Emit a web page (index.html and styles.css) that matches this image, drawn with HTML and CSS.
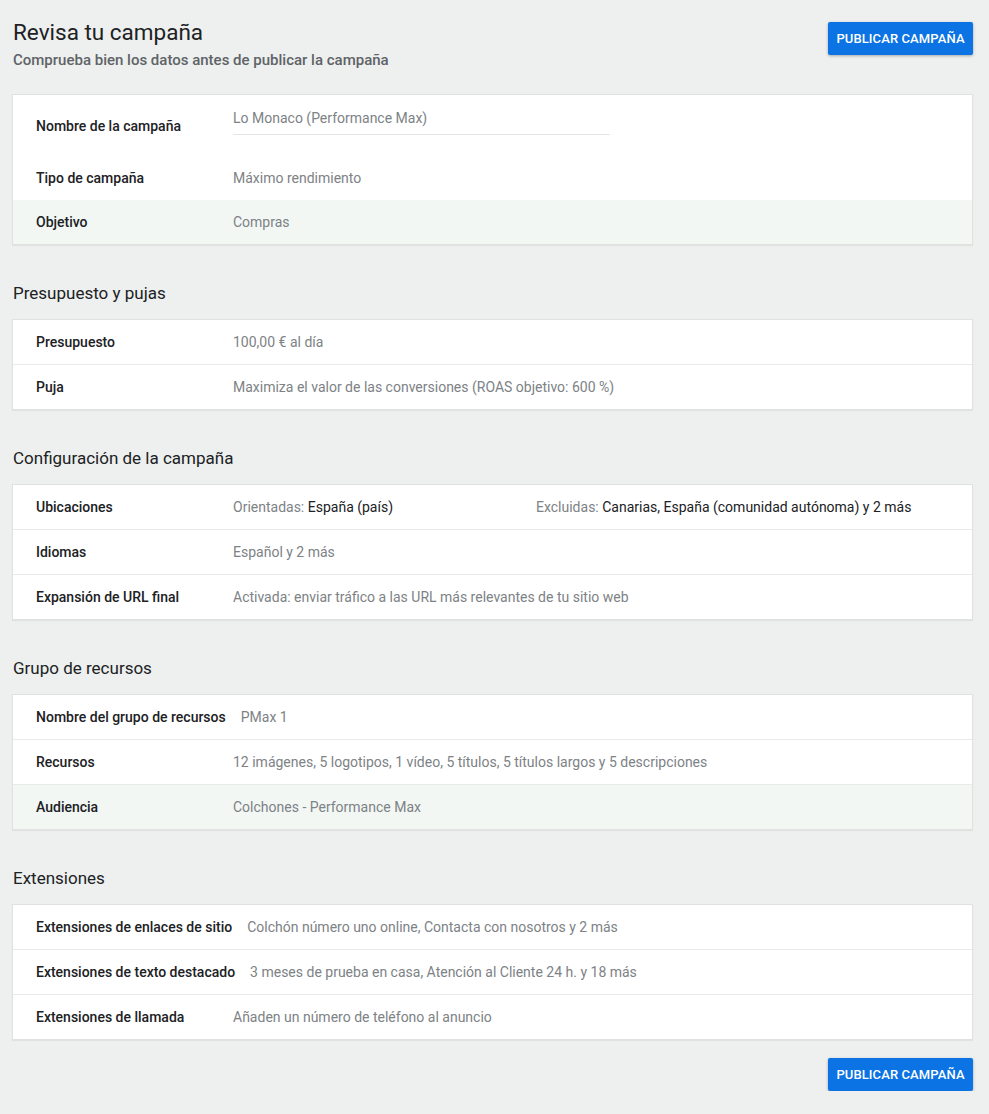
FILE: index.html
```html
<!DOCTYPE html>
<html lang="es">
<head>
    <meta charset="UTF-8">
    <meta name="viewport" content="width=device-width, initial-scale=1.0">
    <title>Revisa tu campaña</title>
    <link rel="stylesheet" href="styles.css">
</head>
<body>

<div class="page">
    <!-- CABECERA -->
    <div class="header">
        <div>
            <h1>Revisa tu campaña</h1>
            <div class="subtitle">Comprueba bien los datos antes de publicar la campaña</div>
        </div>
        <button class="publish">Publicar campaña</button>
    </div>

    <!-- DATOS GENERALES -->
    <div class="card first">
        <div class="row name-row">
            <div class="label">Nombre de la campaña</div>
            <div class="value input-like">Lo Monaco (Performance Max)</div>
        </div>
        <div class="row">
            <div class="label">Tipo de campaña</div>
            <div class="value">Máximo rendimiento</div>
        </div>
        <div class="row tinted">
            <div class="label">Objetivo</div>
            <div class="value">Compras</div>
        </div>
    </div>

    <!-- PRESUPUESTO -->
    <div class="section-title">Presupuesto y pujas</div>
    <div class="card">
        <div class="row">
            <div class="label">Presupuesto</div>
            <div class="value">100,00 € al día</div>
        </div>
        <div class="row">
            <div class="label">Puja</div>
            <div class="value">Maximiza el valor de las conversiones (ROAS objetivo: 600 %)</div>
        </div>
    </div>

    <!-- CONFIGURACIÓN -->
    <div class="section-title">Configuración de la campaña</div>
    <div class="card">
        <div class="row">
            <div class="label">Ubicaciones</div>
            <div class="value split">
                <span class="col">Orientadas: <b>España (país)</b></span>
                <span>Excluidas: <b>Canarias, España (comunidad autónoma) y 2 más</b></span>
            </div>
        </div>
        <div class="row">
            <div class="label">Idiomas</div>
            <div class="value">Español y 2 más</div>
        </div>
        <div class="row">
            <div class="label">Expansión de URL final</div>
            <div class="value">Activada: enviar tráfico a las URL más relevantes de tu sitio web</div>
        </div>
    </div>

    <!-- GRUPO DE RECURSOS -->
    <div class="section-title">Grupo de recursos</div>
    <div class="card">
        <div class="row">
            <div class="label">Nombre del grupo de recursos</div>
            <div class="value">PMax 1</div>
        </div>
        <div class="row">
            <div class="label">Recursos</div>
            <div class="value">12 imágenes, 5 logotipos, 1 vídeo, 5 títulos, 5 títulos largos y 5 descripciones</div>
        </div>
        <div class="row tinted">
            <div class="label">Audiencia</div>
            <div class="value">Colchones - Performance Max</div>
        </div>
    </div>

    <!-- EXTENSIONES -->
    <div class="section-title">Extensiones</div>
    <div class="card">
        <div class="row">
            <div class="label">Extensiones de enlaces de sitio</div>
            <div class="value">Colchón número uno online, Contacta con nosotros y 2 más</div>
        </div>
        <div class="row">
            <div class="label">Extensiones de texto destacado</div>
            <div class="value">3 meses de prueba en casa, Atención al Cliente 24 h. y 18 más</div>
        </div>
        <div class="row">
            <div class="label">Extensiones de llamada</div>
            <div class="value">Añaden un número de teléfono al anuncio</div>
        </div>
    </div>

    <div class="footer">
        <button class="publish">Publicar campaña</button>
    </div>
</div>

</body>
</html>
```

FILE: styles.css
```css
body {
    font-family: Roboto, "Liberation Sans", Arial, sans-serif;
    margin: 0;
    padding: 0;
    background-color: #edf0ee;
    color: #202124;
}
.page {
    width: 961px;
    margin-left: 12px;
    padding-top: 18px;
}
.header {
    display: flex;
    justify-content: space-between;
    align-items: flex-start;
    padding-left: 1px;
}
h1 {
    margin: 0;
    font-size: 22.5px;
    font-weight: 400;
    line-height: 28px;
    color: #202124;
}
.subtitle {
    margin-top: 4px;
    font-size: 15px;
    font-weight: 500;
    line-height: 20px;
    color: #5f6368;
}
.publish {
    margin-top: 4px;
    background: #0b73e3;
    color: white;
    border: none;
    border-radius: 2px;
    height: 33px;
    width: 145px;
    padding: 0;
    font-family: inherit;
    font-size: 13px;
    font-weight: 500;
    text-transform: uppercase;
    letter-spacing: 0.1px;
    box-shadow: 0 1px 3px rgba(0, 0, 0, 0.3);
    cursor: pointer;
}
.card {
    background: #ffffff;
    border: 1px solid #dfe2e0;
    box-shadow: 0 1px 1px rgba(0, 0, 0, 0.05);
}
.card.first {
    margin-top: 24px;
}
.row {
    display: flex;
    align-items: center;
    height: 44px;
    padding-left: 23px;
    font-size: 14px;
    border-top: 1px solid #e8ebe9;
}
.row:first-child {
    border-top: none;
}
.first .row {
    border-top: none;
}
.row.tinted {
    background: #f2f7f4;
}
.name-row {
    height: 61px;
}
.label {
    min-width: 182px;
    padding-right: 15px;
    font-weight: 500;
    color: #202124;
    white-space: nowrap;
}
.value {
    color: #7d8285;
    white-space: nowrap;
}
.value b {
    font-weight: 400;
    color: #202124;
}
.input-like {
    width: 377px;
    padding-bottom: 8px;
    margin-top: -7px;
    border-bottom: 1px solid #e3e6e4;
}
.split {
    display: flex;
}
.split .col {
    width: 303px;
}
.section-title {
    margin-top: 36px;
    margin-bottom: 14px;
    padding-left: 1px;
    font-size: 17px;
    line-height: 24px;
    color: #202124;
}
.footer {
    display: flex;
    justify-content: flex-end;
    margin-top: 14px;
}
```
